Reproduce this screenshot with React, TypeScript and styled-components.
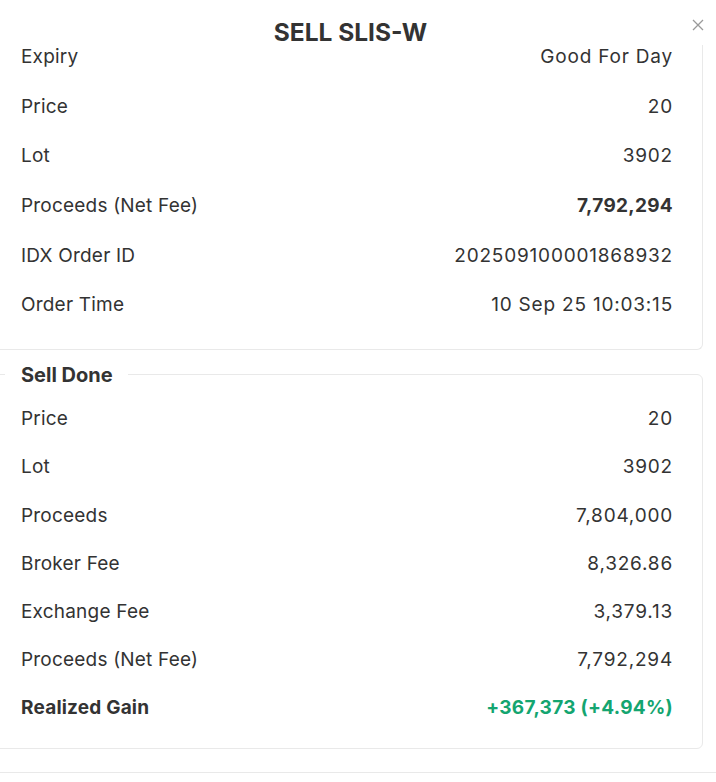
import React from 'react';
import styled, { createGlobalStyle } from 'styled-components';

const GlobalStyle = createGlobalStyle`
  html, body {
    margin: 0;
    padding: 0;
    background: #ffffff;
  }
  body {
    font-family: Inter, "Open Sans", sans-serif;
    color: #333333;
  }
`;

const Viewport = styled.div`
  position: relative;
  width: 716px;
  height: 782px;
  overflow: hidden;
  background: #ffffff;
`;

const Header = styled.div`
  position: absolute;
  top: 0;
  left: 0;
  right: 0;
  height: 45px;
  background: #ffffff;
  z-index: 2;
`;

const Title = styled.h2`
  margin: 0;
  padding-top: 19px;
  width: 701px;
  text-align: center;
  font-size: 24.5px;
  line-height: 26px;
  font-weight: 700;
  color: #333333;
`;

const Close = styled.button`
  position: absolute;
  top: 17px;
  right: 10px;
  width: 16px;
  height: 16px;
  padding: 0;
  border: none;
  background: none;
  cursor: pointer;
`;

const Content = styled.div`
  display: flex;
  flex-direction: column;
  margin-left: -9px;
  width: 712px;
`;

const Card = styled.div`
  border: 1px solid #e9e9e9;
  border-top: none;
  border-radius: 0 0 6px 6px;
  padding: 32px 29px 19px 29px;
`;

const Fieldset = styled.fieldset`
  margin: 14px 0 0;
  border: 1px solid #e9e9e9;
  border-radius: 6px;
  padding: 9px 29px 16px 29px;
  min-width: 0;
`;

const Legend = styled.legend`
  margin-left: -16px;
  padding: 0 15px 0 16px;
  font-size: 20px;
  line-height: 22px;
  font-weight: 700;
  color: #333333;
`;

const Divider = styled.div`
  margin-top: 23px;
  margin-left: 9px;
  border-top: 1px solid #e9e9e9;
  width: 716px;
`;

const Row = styled.div<{ $h: number }>`
  display: flex;
  justify-content: space-between;
  align-items: center;
  height: ${(p) => p.$h}px;
  font-size: 19px;
`;

const Label = styled.span<{ $bold?: boolean }>`
  font-weight: ${(p) => (p.$bold ? 700 : 400)};
  letter-spacing: 0.2px;
  color: #333333;
`;

const Value = styled.span<{ $bold?: boolean; $gain?: boolean }>`
  font-weight: ${(p) => (p.$bold ? 700 : 400)};
  letter-spacing: ${(p) => (p.$bold ? 0.3 : 0.8)}px;
  color: ${(p) => (p.$gain ? '#14a570' : '#333333')};
`;

type Item = { label: string; value: string; boldLabel?: boolean; boldValue?: boolean; gain?: boolean };

const orderRows: Item[] = [
  { label: 'Expiry', value: 'Good For Day' },
  { label: 'Price', value: '20' },
  { label: 'Lot', value: '3902' },
  { label: 'Proceeds (Net Fee)', value: '7,792,294', boldValue: true },
  { label: 'IDX Order ID', value: '202509100001868932' },
  { label: 'Order Time', value: '10 Sep 25 10:03:15' },
];

const doneRows: Item[] = [
  { label: 'Price', value: '20' },
  { label: 'Lot', value: '3902' },
  { label: 'Proceeds', value: '7,804,000' },
  { label: 'Broker Fee', value: '8,326.86' },
  { label: 'Exchange Fee', value: '3,379.13' },
  { label: 'Proceeds (Net Fee)', value: '7,792,294' },
  { label: 'Realized Gain', value: '+367,373 (+4.94%)', boldLabel: true, boldValue: true, gain: true },
];

const Rows = ({ items, h }: { items: Item[]; h: number }) => (
  <>
    {items.map((it) => (
      <Row key={it.label} $h={h}>
        <Label $bold={it.boldLabel}>{it.label}</Label>
        <Value $bold={it.boldValue} $gain={it.gain}>{it.value}</Value>
      </Row>
    ))}
  </>
);

export default function App() {
  return (
    <Viewport>
      <GlobalStyle />
      <Header>
        <Title>SELL SLIS-W</Title>
        <Close aria-label="close">
          <svg width="16" height="16" viewBox="0 0 16 16">
            <path d="M3 3 L13 13 M13 3 L3 13" stroke="#9a9a9a" strokeWidth="1.3" fill="none" />
          </svg>
        </Close>
      </Header>
      <Content>
        <Card>
          <Rows items={orderRows} h={49.6} />
        </Card>
        <Fieldset>
          <Legend>Sell Done</Legend>
          <Rows items={doneRows} h={48.2} />
        </Fieldset>
        <Divider />
      </Content>
    </Viewport>
  );
}
